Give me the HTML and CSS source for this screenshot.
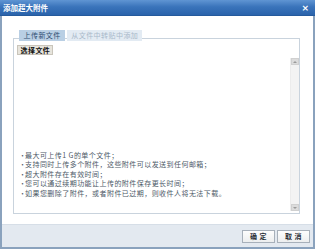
FILE: index.html
```html
<!DOCTYPE html>
<html lang="zh">
<head>
<meta charset="utf-8">
<link rel="stylesheet" href="styles.css">
</head>
<body>
<div class="dialog">
  <div class="titlebar">
    <span class="title">添加超大附件</span>
    <span class="close">×</span>
  </div>
  <div class="content">
    <div class="tabs">
      <span class="tab active">上传新文件</span>
      <span class="tab">从文件中转贴中添加</span>
    </div>
    <div class="box">
      <div class="box-top">
        <span class="pick-btn">选择文件</span>
      </div>
      <div class="scroll-area">
        <ul class="tips">
          <li>最大可上传1 G的单个文件；</li>
          <li>支持同时上传多个附件，这些附件可以发送到任何邮箱；</li>
          <li>超大附件存在有效时间；</li>
          <li>您可以通过续期功能让上传的附件保存更长时间；</li>
          <li>如果您删除了附件，或者附件已过期，则收件人将无法下载。</li>
        </ul>
        <div class="scrollbar">
          <span class="arrow up"></span>
          <span class="track"></span>
          <span class="arrow down"></span>
        </div>
      </div>
    </div>
  </div>
  <div class="footer">
    <span class="btn">确 定</span>
    <span class="btn">取 消</span>
  </div>
</div>
</body>
</html>
```
FILE: styles.css
```css
html, body {
  margin: 0;
  padding: 0;
  background: #ffffff;
}
.dialog {
  width: 315px;
  height: 249px;
  box-sizing: border-box;
  border-left: 2px solid #8aa2bd;
  border-right: 2px solid #8aa2bd;
  border-bottom: 2px solid #8aa2bd;
  display: flex;
  flex-direction: column;
  font-family: "Noto Sans CJK SC", "Liberation Sans", sans-serif;
  font-size: 7px;
  letter-spacing: 0.45px;
  background: #ffffff;
}
.titlebar {
  height: 16px;
  margin: 0 -2px;
  padding: 0 6px 0 3px;
  background: linear-gradient(#5f95d3, #3a74bb 45%, #2a63ab);
  border-bottom: 1px solid #255a9c;
  box-sizing: border-box;
  display: flex;
  align-items: center;
  justify-content: space-between;
  color: #ffffff;
}
.title {
  font-weight: bold;
  font-size: 7.5px;
  letter-spacing: 0;
  line-height: 10px;
}
.close {
  font-weight: bold;
  font-size: 9px;
  line-height: 10px;
  letter-spacing: 0;
  font-family: "DejaVu Sans", sans-serif;
}
.content {
  flex: 1;
  padding: 14px 13px 0 11px;
  display: flex;
  flex-direction: column;
}
.tabs {
  display: flex;
  gap: 2px;
  margin-left: 6px;
  height: 11px;
  margin-bottom: -3px;
  position: relative;
  z-index: 1;
}
.tab {
  height: 11px;
  line-height: 11px;
  padding: 0 4px 0 4.5px;
  white-space: nowrap;
  background: #e3ebf3;
  color: #a9b9ca;
}
.tab.active {
  background: #b9cfe4;
  color: #2f4e72;
}
.box {
  height: 176px;
  box-sizing: border-box;
  border: 1px solid #c9d3dd;
  display: flex;
  flex-direction: column;
}
.box-top {
  height: 19px;
  padding: 6px 0 0 3px;
  box-sizing: border-box;
}
.pick-btn {
  display: inline-block;
  height: 8px;
  line-height: 8px;
  padding: 0 2px 0 2.5px;
  background: #e7e4dc;
  border: 1px solid #c9c5bb;
  font-weight: bold;
  white-space: nowrap;
  color: #111111;
  vertical-align: top;
}
.scroll-area {
  flex: 1;
  display: flex;
  margin-bottom: 2px;
}
.tips {
  flex: 1;
  margin: 0;
  padding: 0 0 13px 5px;
  list-style: none;
  display: flex;
  flex-direction: column;
  justify-content: flex-end;
  color: #4e5a68;
}
.tips li {
  line-height: 9.4px;
  height: 9.4px;
  white-space: nowrap;
  display: flex;
}
.tips li::before {
  content: "•";
  width: 6px;
  flex: none;
  letter-spacing: 0;
  color: #55606d;
}
.scrollbar {
  width: 8px;
  display: flex;
  flex-direction: column;
  background: #f3f3f3;
  border-left: 1px solid #ececec;
}
.arrow {
  height: 7px;
  background: #dcdcdc;
  border: 1px solid #d0d0d0;
  box-sizing: border-box;
  display: flex;
  align-items: center;
  justify-content: center;
}
.arrow::after {
  content: "";
  border-left: 2px solid transparent;
  border-right: 2px solid transparent;
}
.arrow.up::after {
  border-bottom: 2px solid #9a9a9a;
}
.arrow.down::after {
  border-top: 2px solid #9a9a9a;
}
.track {
  flex: 1;
}
.footer {
  height: 23px;
  margin-top: 10px;
  background: #e3e9f0;
  border-top: 1px solid #d6dee7;
  box-sizing: border-box;
  display: flex;
  justify-content: flex-end;
  align-items: center;
  gap: 2px;
  padding-right: 3px;
}
.btn {
  width: 33px;
  height: 13px;
  box-sizing: border-box;
  border: 1px solid #a7b0ba;
  background: linear-gradient(#fdfdfd, #eceeef);
  color: #2a2f36;
  font-weight: bold;
  text-align: center;
  line-height: 11px;
  font-size: 7px;
  white-space: nowrap;
}
```
